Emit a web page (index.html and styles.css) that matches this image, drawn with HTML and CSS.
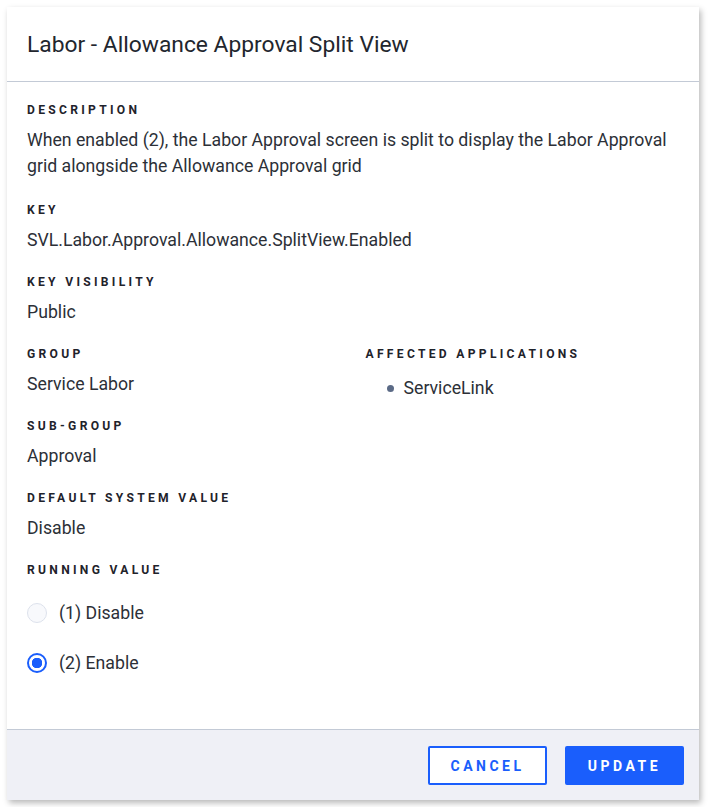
FILE: index.html
```html
<!DOCTYPE html>
<html lang="en">

<head>
    <meta charset="UTF-8">
    <meta name="viewport" content="width=device-width, initial-scale=1.0">
    <title>Labor - Allowance Approval Split View</title>
    <link rel="stylesheet" href="styles.css">
</head>

<body>
    <div class="dialog">
        <div class="dialog-header">
            <h1>Labor - Allowance Approval Split View</h1>
        </div>

        <div class="dialog-body">
            <div class="field field-long">
                <div class="label">Description</div>
                <div class="value">When enabled (2), the Labor Approval screen is split to display the Labor Approval
                    grid alongside the Allowance Approval grid</div>
            </div>
            <div class="field">
                <div class="label">Key</div>
                <div class="value">SVL.Labor.Approval.Allowance.SplitView.Enabled</div>
            </div>
            <div class="field">
                <div class="label">Key Visibility</div>
                <div class="value">Public</div>
            </div>

            <div class="columns">
                <div>
                    <div class="field">
                        <div class="label">Group</div>
                        <div class="value">Service Labor</div>
                    </div>
                    <div class="field">
                        <div class="label">Sub-Group</div>
                        <div class="value">Approval</div>
                    </div>
                    <div class="field">
                        <div class="label">Default System Value</div>
                        <div class="value">Disable</div>
                    </div>
                    <div class="field">
                        <div class="label">Running Value</div>
                        <div class="radios">
                            <label class="radio">
                                <span class="circle"></span>
                                (1) Disable
                            </label>
                            <label class="radio checked">
                                <span class="circle"></span>
                                (2) Enable
                            </label>
                        </div>
                    </div>
                </div>
                <div>
                    <div class="field">
                        <div class="label">Affected Applications</div>
                        <ul class="apps">
                            <li>ServiceLink</li>
                        </ul>
                    </div>
                </div>
            </div>
        </div>

        <div class="dialog-footer">
            <button class="btn btn-outline">Cancel</button>
            <button class="btn btn-primary">Update</button>
        </div>
    </div>
</body>

</html>
```

FILE: styles.css
```css
body {
    font-family: Roboto, "Liberation Sans", sans-serif;
    margin: 0;
    padding: 7px;
    background-color: #ffffff;
    color: #2b2f36;
}

.dialog {
    width: 692px;
    height: 793px;
    display: flex;
    flex-direction: column;
    background-color: #fff;
    box-shadow: 2px 3px 6px rgba(0, 0, 0, 0.28);
}

.dialog-header {
    height: 74px;
    display: flex;
    align-items: center;
    padding: 0 20px;
    border-bottom: 1px solid #c3cad6;
}

.dialog-header h1 {
    margin: 0;
    font-size: 22.8px;
    font-weight: 400;
    color: #22262e;
}

.dialog-body {
    flex: 1;
    padding: 20px 20px 0;
}

.field {
    margin-bottom: 21px;
}

.field-long {
    margin-bottom: 23px;
}

.label {
    font-size: 12.1px;
    line-height: 16px;
    font-weight: 700;
    letter-spacing: 3.3px;
    text-transform: uppercase;
    color: #1f232b;
    margin-bottom: 9px;
}

.value {
    font-size: 17.7px;
    line-height: 26px;
    color: #2c3037;
}

.columns {
    display: grid;
    grid-template-columns: 1fr 1fr;
    gap: 25px;
}

.apps {
    margin: 0;
    padding: 4px 0 0 21px;
    list-style: none;
}

.apps li {
    font-size: 17.7px;
    line-height: 26px;
    color: #2c3037;
    display: flex;
    align-items: center;
}

.apps li::before {
    content: "";
    width: 7px;
    height: 7px;
    border-radius: 50%;
    background-color: #5b6a86;
    margin-right: 10px;
}

.radios {
    display: flex;
    flex-direction: column;
    gap: 24px;
    padding-top: 13px;
}

.radio {
    display: flex;
    align-items: center;
    gap: 12px;
    font-size: 17.7px;
    line-height: 26px;
    color: #2c3037;
}

.circle {
    width: 20px;
    height: 20px;
    box-sizing: border-box;
    border-radius: 50%;
    border: 1px solid #dde2ec;
    background-color: #f8f9fc;
}

.radio.checked .circle {
    border: 2px solid #1a5efc;
    background-color: #fff;
    background-image: radial-gradient(circle, #1a5efc 0 5px, transparent 5.5px);
}

.dialog-footer {
    height: 71px;
    box-sizing: border-box;
    display: flex;
    justify-content: flex-end;
    align-items: center;
    gap: 18px;
    padding: 1px 15px 0 0;
    background-color: #eff0f6;
    border-top: 1px solid #c3cad6;
}

.btn {
    width: 119px;
    height: 39px;
    box-sizing: border-box;
    font-family: Roboto, "Liberation Sans", sans-serif;
    font-size: 14px;
    font-weight: 700;
    letter-spacing: 3.5px;
    text-transform: uppercase;
    border-radius: 2px;
    cursor: pointer;
}

.btn-outline {
    background-color: #fff;
    color: #1a5efc;
    border: 2px solid #1a5efc;
}

.btn-primary {
    background-color: #1a5efc;
    color: #fff;
    border: 2px solid #1a5efc;
}
```
